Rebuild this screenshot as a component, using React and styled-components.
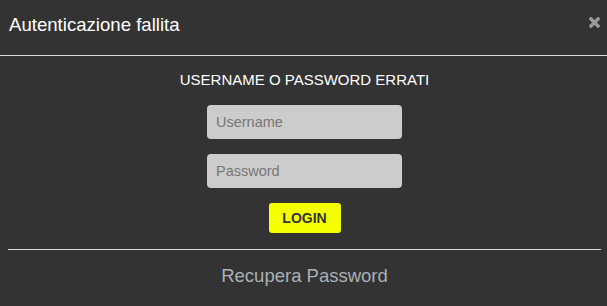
import styled, { createGlobalStyle } from "styled-components"

const Global = createGlobalStyle`
    html, body {
        margin: 0;
        padding: 0;
        background: #333333;
    }
    * {
        box-sizing: border-box;
    }
`

export default function App()
{
    return (
    <>
        <Global />
        <Modal>
            <Header>
                <Title>Autenticazione fallita</Title>
                <Close aria-label="chiudi">
                    <svg width="11" height="11" viewBox="0 0 11 11">
                        <path d="M2 2 L9 9 M9 2 L2 9" stroke="#9a9a9a" strokeWidth="3.4" strokeLinecap="square" />
                    </svg>
                </Close>
            </Header>
            <Body>
                <Message>USERNAME O PASSWORD ERRATI</Message>
                <Form>
                    <Field type="text" placeholder="Username" />
                    <Field type="password" placeholder="Password" />
                    <LoginButton type="button">LOGIN</LoginButton>
                </Form>
            </Body>
            <Footer>
                <Recover href="#">Recupera Password</Recover>
            </Footer>
        </Modal>
    </>)
}

const Modal = styled.div`
    width: 607px;
    height: 306px;
    background-color: #333333;
    font-family: "Liberation Sans", Arial, sans-serif;
    color: #ffffff;
    display: flex;
    flex-direction: column;
`

const Header = styled.div`
    height: 56px;
    display: flex;
    align-items: flex-start;
    justify-content: space-between;
    padding: 14px 7px 0 9px;
    border-bottom: 1px solid #dddddd;
`

const Title = styled.h4`
    margin: 0;
    font-size: 18.6px;
    font-weight: normal;
    line-height: 22px;
`

const Close = styled.button`
    border: none;
    background: none;
    padding: 0;
    margin-top: 3px;
    width: 11px;
    height: 11px;
    display: flex;
    cursor: pointer;
`

const Body = styled.div`
    display: flex;
    flex-direction: column;
    align-items: center;
    padding: 14px 0 0 2px;
`

const Message = styled.div`
    font-size: 15px;
    line-height: 20px;
`

const Form = styled.form`
    display: flex;
    flex-direction: column;
    align-items: center;
    gap: 15px;
    margin-top: 15px;
`

const Field = styled.input`
    width: 195px;
    height: 34px;
    border: none;
    border-radius: 4px;
    background-color: #cccccc;
    padding: 0 9px;
    font-family: "Liberation Sans", Arial, sans-serif;
    font-size: 14.5px;
    color: #333333;
    outline: none;

    &::placeholder {
        color: #777777;
    }
`

const LoginButton = styled.button`
    width: 72px;
    height: 30px;
    border: none;
    border-radius: 3px;
    background-color: #f5ff00;
    color: #333333;
    font-family: "Liberation Sans", Arial, sans-serif;
    font-weight: bold;
    font-size: 14px;
    padding: 0;
`

const Footer = styled.div`
    margin: 16px 6px 0 8px;
    border-top: 1px solid #dddddd;
    display: flex;
    justify-content: center;
    padding-top: 15px;
`

const Recover = styled.a`
    font-size: 18.5px;
    line-height: 22px;
    color: #aab0b6;
    text-decoration: none;
`
